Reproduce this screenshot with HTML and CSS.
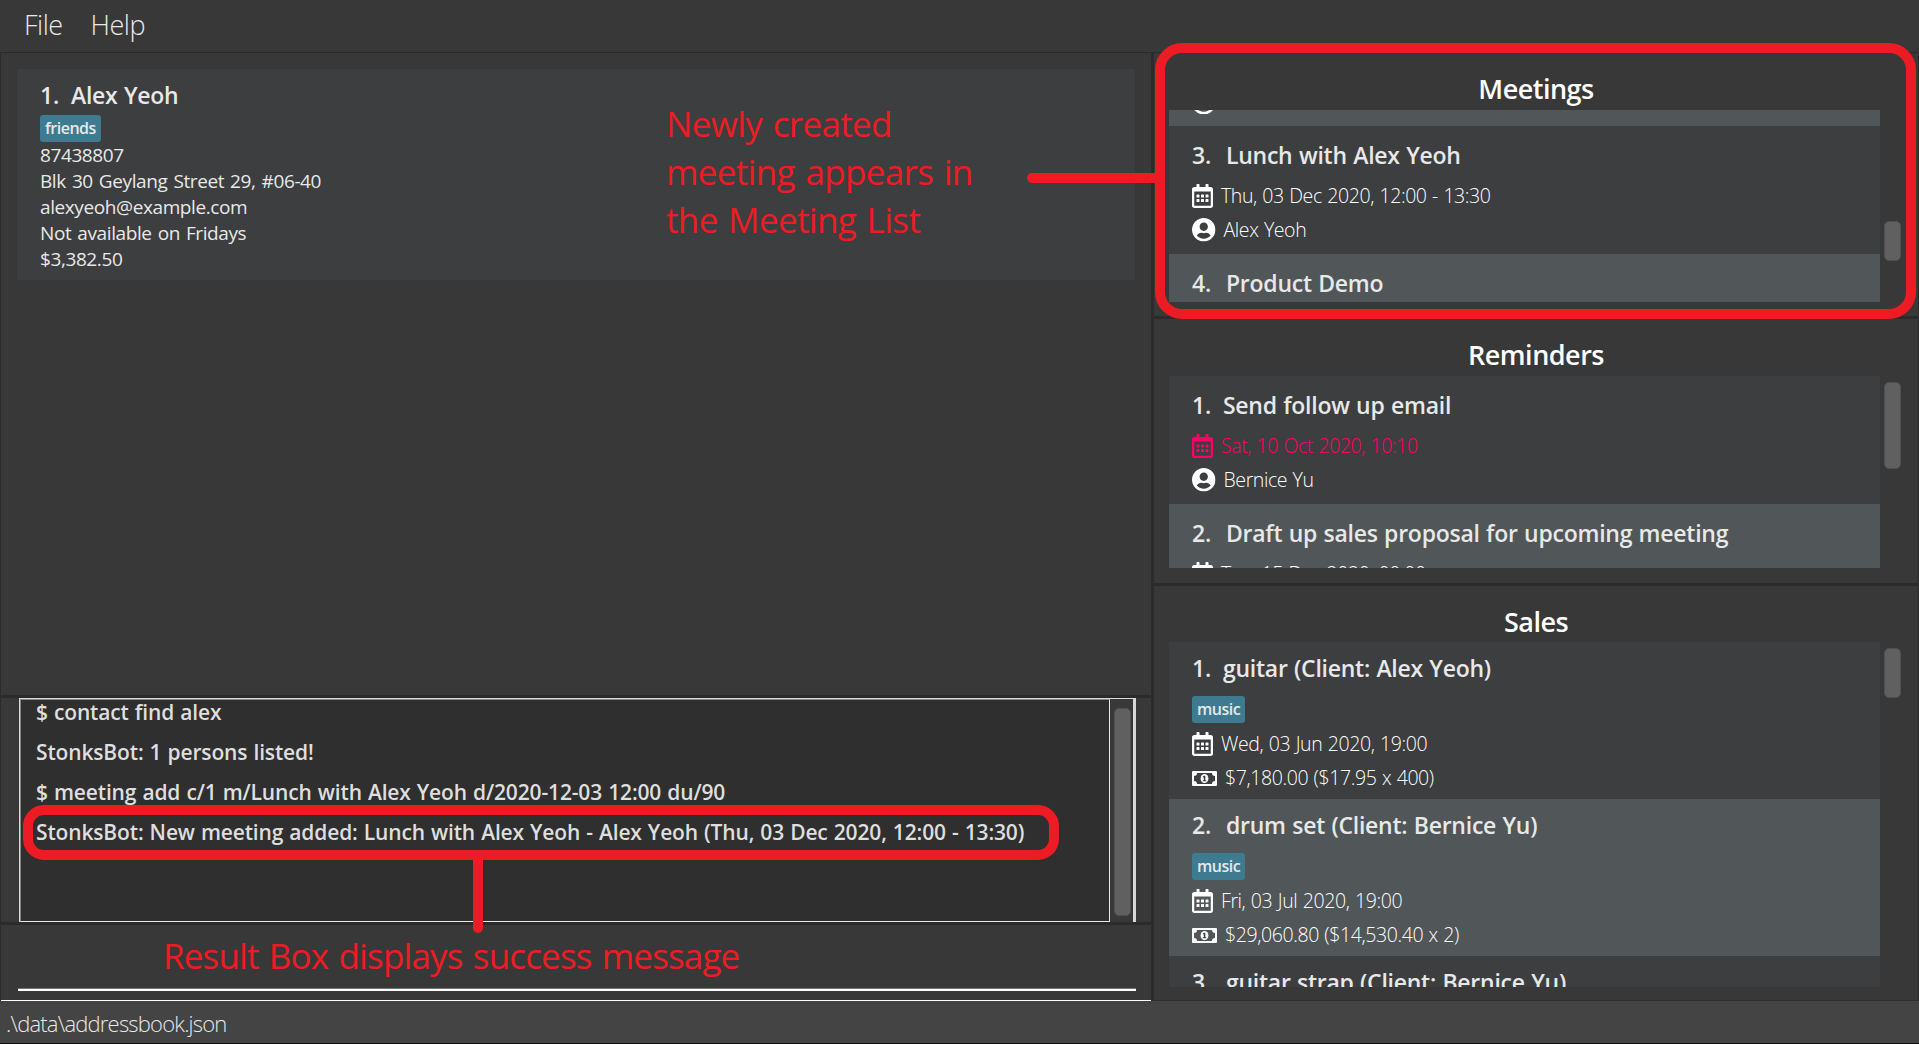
FILE: index.html
```html
<!DOCTYPE html>
<html lang="en">
<head>
<meta charset="utf-8">
<title>StonksBook</title>
<link rel="stylesheet" href="styles.css">
</head>
<body>
<svg class="defs" width="0" height="0">
  <symbol id="calendar" viewBox="0 0 448 512"><path d="M148 288h-40c-6.600 0-12-5.400-12-12v-40c0-6.600 5.400-12 12-12h40c6.600 0 12 5.400 12 12v40c0 6.600-5.400 12-12 12zm108-12v-40c0-6.600-5.400-12-12-12h-40c-6.600 0-12 5.400-12 12v40c0 6.600 5.400 12 12 12h40c6.600 0 12-5.400 12-12zm96 0v-40c0-6.600-5.400-12-12-12h-40c-6.600 0-12 5.400-12 12v40c0 6.600 5.400 12 12 12h40c6.600 0 12-5.400 12-12zm-96 96v-40c0-6.600-5.400-12-12-12h-40c-6.600 0-12 5.400-12 12v40c0 6.600 5.400 12 12 12h40c6.600 0 12-5.400 12-12zm-96 0v-40c0-6.600-5.400-12-12-12h-40c-6.600 0-12 5.400-12 12v40c0 6.600 5.400 12 12 12h40c6.600 0 12-5.400 12-12zm192 0v-40c0-6.600-5.400-12-12-12h-40c-6.600 0-12 5.400-12 12v40c0 6.600 5.400 12 12 12h40c6.600 0 12-5.400 12-12zm96-260v352c0 26.500-21.500 48-48 48H48c-26.500 0-48-21.500-48-48V112c0-26.500 21.500-48 48-48h48V12c0-6.600 5.400-12 12-12h40c6.600 0 12 5.400 12 12v52h128V12c0-6.600 5.400-12 12-12h40c6.600 0 12 5.400 12 12v52h48c26.500 0 48 21.500 48 48zm-48 346V160H48v298c0 3.300 2.700 6 6 6h340c3.300 0 6-2.700 6-6z"/></symbol>
  <symbol id="user" viewBox="0 8 496 496"><path d="M248 8C111 8 0 119 0 256s111 248 248 248 248-111 248-248S385 8 248 8zm0 96c48.600 0 88 39.400 88 88s-39.400 88-88 88-88-39.400-88-88 39.400-88 88-88zm0 344c-58.700 0-111.300-26.600-146.500-68.200 18.800-35.400 55.600-59.800 98.500-59.800 2.400 0 4.800.4 7.100 1.100 13 4.200 26.600 6.900 40.900 6.900 14.300 0 28-2.700 40.900-6.900 2.300-.7 4.700-1.100 7.100-1.100 42.900 0 79.700 24.400 98.500 59.800C359.300 421.400 306.700 448 248 448z"/></symbol>
  <symbol id="money" viewBox="0 0 25 15"><path fill-rule="evenodd" d="M1 0h23a1 1 0 0 1 1 1v13a1 1 0 0 1-1 1H1a1 1 0 0 1-1-1V1a1 1 0 0 1 1-1zM5 2a3 3 0 0 1-3 3v5a3 3 0 0 1 3 3h15a3 3 0 0 1 3-3V5a3 3 0 0 1-3-3z"/><ellipse cx="12.500" cy="7.500" rx="3.900" ry="4.500"/><path class="cut" d="M12 4.800h1.300v4.400h1v1h-3.500v-1h1V6.300l-.9.300v-1z"/></symbol>
</svg>
<header class="menubar"><span>File</span><span>Help</span></header>
<main class="main">
  <section class="left">
    <div class="pane contacts">
      <article class="contact">
        <h2 class="title"><span class="one">1.</span><span>Alex Yeoh</span></h2>
        <span class="tag">friends</span>
        <p>87438807</p>
        <p>Blk 30 Geylang Street 29, #06-40</p>
        <p>alexyeoh@example.com</p>
        <p>Not available on Fridays</p>
        <p>$3,382.50</p>
      </article>
    </div>
    <div class="pane result">
      <div class="console">
        <div class="log">
          <p>$ contact find alex</p>
          <p>StonksBot: 1 persons listed!</p>
          <p>$ meeting add c/1 m/Lunch with Alex Yeoh d/2020-12-03 12:00 du/90</p>
          <p>StonksBot: New meeting added: Lunch with Alex Yeoh - Alex Yeoh (Thu, 03 Dec 2020, 12:00 - 13:30)</p>
        </div>
        <div class="track"><i class="thumb thumb-log"></i></div>
      </div>
    </div>
    <div class="pane command"><div class="input"></div></div>
  </section>
  <section class="right">
    <div class="pane side">
      <h1>Meetings</h1>
      <div class="scroller">
        <div class="list">
          <article class="item alt tail"><svg class="icon user"><use href="#user"/></svg></article>
          <article class="item">
            <h2 class="title"><span>3.</span><span>Lunch with Alex Yeoh</span></h2>
            <div class="row"><svg class="icon cal"><use href="#calendar"/></svg><span>Thu, 03 Dec 2020, 12:00 - 13:30</span></div>
            <div class="row"><svg class="icon user"><use href="#user"/></svg><span>Alex Yeoh</span></div>
          </article>
          <article class="item alt"><h2 class="title"><span>4.</span><span>Product Demo</span></h2></article>
        </div>
        <div class="track"><i class="thumb thumb-meetings"></i></div>
      </div>
    </div>
    <div class="pane side">
      <h1>Reminders</h1>
      <div class="scroller">
        <div class="list">
          <article class="item">
            <h2 class="title"><span class="one">1.</span><span>Send follow up email</span></h2>
            <div class="row overdue"><svg class="icon cal"><use href="#calendar"/></svg><span>Sat, 10 Oct 2020, 10:10</span></div>
            <div class="row"><svg class="icon user"><use href="#user"/></svg><span>Bernice Yu</span></div>
          </article>
          <article class="item alt">
            <h2 class="title"><span>2.</span><span>Draft up sales proposal for upcoming meeting</span></h2>
            <div class="row"><svg class="icon cal"><use href="#calendar"/></svg><span>Tue, 15 Dec 2020, 00:00</span></div>
          </article>
        </div>
        <div class="track"><i class="thumb thumb-reminders"></i></div>
      </div>
    </div>
    <div class="pane side side-sales">
      <h1>Sales</h1>
      <div class="scroller">
        <div class="list sales">
          <article class="item">
            <h2 class="title"><span class="one">1.</span><span>guitar (Client: Alex Yeoh)</span></h2>
            <span class="tag">music</span>
            <div class="row"><svg class="icon cal"><use href="#calendar"/></svg><span>Wed, 03 Jun 2020, 19:00</span></div>
            <div class="row"><svg class="icon money"><use href="#money"/></svg><span>$7,180.00 ($17.95 x 400)</span></div>
          </article>
          <article class="item alt">
            <h2 class="title"><span>2.</span><span>drum set (Client: Bernice Yu)</span></h2>
            <span class="tag">music</span>
            <div class="row"><svg class="icon cal"><use href="#calendar"/></svg><span>Fri, 03 Jul 2020, 19:00</span></div>
            <div class="row"><svg class="icon money"><use href="#money"/></svg><span>$29,060.80 ($14,530.40 x 2)</span></div>
          </article>
          <article class="item"><h2 class="title"><span>3.</span><span>guitar strap (Client: Bernice Yu)</span></h2></article>
        </div>
        <div class="track"><i class="thumb thumb-sales"></i></div>
      </div>
    </div>
  </section>
</main>
<footer class="status">.\data\addressbook.json</footer>
<div class="callout box-meetings"></div>
<div class="stem stem-meetings"></div>
<div class="callout box-result"></div>
<div class="stem stem-result"></div>
<p class="note note-meetings">Newly created<br>meeting appears in<br>the Meeting List</p>
<p class="note note-result">Result Box displays success message</p>
</body>
</html>
```
FILE: styles.css
```css
* { box-sizing: border-box; margin: 0; padding: 0; }
body {
  width: 1919px; height: 1044px; overflow: hidden; position: relative;
  display: grid; grid-template-rows: 52px 949px 43px;
  background: #383838; color: #e8e8e8;
  font-family: "Open Sans", "Noto Sans", sans-serif;
}
.defs { position: absolute; }
.menubar { display: flex; gap: 28px; padding-left: 24px; font-size: 27px; font-weight: 300; line-height: 50px; letter-spacing: -0.5px; }
.main { display: grid; grid-template-columns: 1150px 764px; column-gap: 3px; padding: 1px 1px 0; background: #2b2b2b; }
.left { display: grid; grid-template-rows: 642px 224px 75px; row-gap: 3px; border-bottom: 1px solid #fff; }
.right { display: grid; grid-template-rows: 263px 264px 414px; row-gap: 3px; border-bottom: 1px solid #2f2f2f; }
.pane { background: #383838; overflow: hidden; }
.contacts { padding: 16px; }
.contact { height: 211px; padding: 9px 23px; background: #3c3e3f; font-size: 19px; line-height: 26px; letter-spacing: -0.4px; word-spacing: 1.500px; }
.title { display: flex; gap: 15px; font-size: 23px; font-weight: 600; line-height: 34px; letter-spacing: -0.25px; word-spacing: 0.700px; }
.title .one { margin-right: -3px; }
.tag { display: block; width: max-content; height: 27px; padding: 0 5px; border-radius: 3px; background: #3e7b91; font-size: 16px; font-weight: 600; line-height: 27px; letter-spacing: -0.5px; }
.contact .tag { margin-top: 3px; }
.result { padding: 0 15px 0 18px; }
.console { display: grid; grid-template-columns: 1090px 1fr; height: 224px; border: solid #d8d8d8; border-width: 1px 3px 0 1px; }
.log { height: 223px; overflow: hidden; padding-left: 15px; background: #2f2f2f; border: 1px solid #e8e8e8; border-top-color: #888; border-left-color: #888; font-size: 21px; font-weight: 600; letter-spacing: -0.15px; word-spacing: 0.800px; color: #dedede; }
.log p { line-height: 40px; }
.log p:first-child { margin-top: -8px; }
.track { display: flex; flex-direction: column; align-items: flex-start; padding-left: 4px; }
.thumb { width: 17px; border-radius: 5px; background: #606060; border: 1px solid #505050; }
.thumb-log { height: 208px; margin-top: 9px; }
.thumb-meetings { height: 40px; margin-top: 111px; }
.thumb-reminders { height: 87px; margin-top: 6px; }
.thumb-sales { height: 50px; margin-top: 6px; }
.command { padding: 63px 15px 0 17px; }
.input { height: 3px; border-bottom: 2px solid #fff; border-top: 1px solid #777; }
.side { display: grid; grid-template-rows: 57px 1fr; padding: 0 15px; }
.side-sales { grid-template-rows: 56px 1fr; }
.side h1 { padding-top: 15px; text-align: center; font-size: 27px; font-weight: 600; line-height: 41px; letter-spacing: -0.5px; color: #fff; }
.scroller { display: grid; grid-template-columns: 711px 1fr; }
.list { height: 192px; overflow: hidden; background: #3c3e3f; }
.list.sales { height: 345px; }
.item { height: 128px; padding: 12px 23px 0; background: #3c3e3f; }
.item.alt { background: #515658; }
.item.tail { height: 16px; padding-top: 0; display: flex; align-items: flex-end; overflow: hidden; padding-bottom: 12px; }
.item .title + .row { margin-top: 7px; }
.sales .item { height: 157px; padding-top: 9px; }
.sales .tag { margin: 11px 0 4px; }
.row { display: flex; align-items: center; gap: 8px; height: 34px; font-size: 19.500px; font-weight: 300; line-height: 34px; letter-spacing: -0.4px; word-spacing: 0.800px; color: #fff; }
.icon { display: block; flex: none; fill: #fff; }
.cal { width: 21px; height: 24px; }
.user { width: 23.500px; height: 23.500px; }
.money { width: 25px; height: 15px; }
.cut { fill: #3c3e3f; }
.overdue { color: #ff0066; }
.overdue .icon { fill: #ff0066; }
.status { background: #444; border-bottom: 1px solid #111; padding-left: 6px; font-size: 22px; font-weight: 300; line-height: 44px; letter-spacing: -0.8px; }
.callout { position: absolute; border: 10px solid #ed1c24; }
.box-meetings { left: 1155px; top: 43px; width: 761px; height: 276px; border-radius: 27px; }
.box-result { left: 23px; top: 805px; width: 1036px; height: 55px; border-radius: 21px; }
.stem { position: absolute; background: #ed1c24; }
.stem-meetings { left: 1027px; top: 173px; width: 130px; height: 10px; border-radius: 5px 0 0 5px; }
.stem-result { left: 473px; top: 856px; width: 10px; height: 77px; border-radius: 0 0 5px 5px; }
.note { position: absolute; font-size: 35px; line-height: 48px; color: #ed1c24; white-space: nowrap; letter-spacing: -0.65px; word-spacing: 2px; }
.note-meetings { left: 666px; top: 100px; }
.note-result { left: 163px; top: 932px; letter-spacing: -0.85px; }
```
